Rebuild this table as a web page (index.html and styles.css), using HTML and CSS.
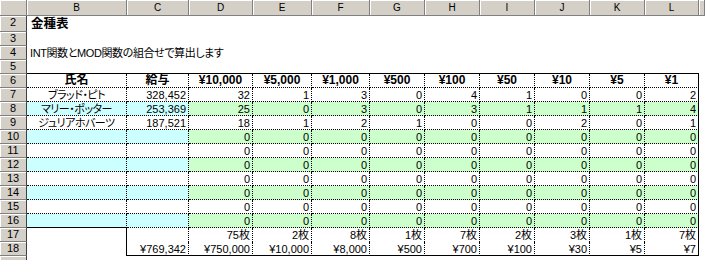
FILE: index.html
```html
<!DOCTYPE html>
<html lang="ja">
<head>
<meta charset="utf-8">
<title>金種表</title>
<link rel="stylesheet" href="styles.css">
</head>
<body>
<div class="sheet">
  <div class="hd"></div><div class="hd">B</div><div class="hd">C</div><div class="hd">D</div><div class="hd">E</div><div class="hd">F</div><div class="hd">G</div><div class="hd">H</div><div class="hd">I</div><div class="hd">J</div><div class="hd">K</div><div class="hd">L</div><div class="hd"></div>

  <div class="rn">2</div><div class="line title">金種表</div><div></div>
  <div class="rn">3</div><div class="line"></div><div></div>
  <div class="rn">4</div><div class="line">INT関数とMOD関数の組合せで算出します</div><div></div>
  <div class="rn">5</div><div class="line rule"></div><div></div>

  <div class="rn">6</div><div class="c h">氏名</div><div class="c h">給与</div><div class="c h">¥10,000</div><div class="c h">¥5,000</div><div class="c h">¥1,000</div><div class="c h">¥500</div><div class="c h">¥100</div><div class="c h">¥50</div><div class="c h">¥10</div><div class="c h">¥5</div><div class="c h last">¥1</div><div></div>

  <div class="rn">7</div><div class="c nm">ブラッド・ピト</div><div class="c">328,452</div><div class="c">32</div><div class="c">1</div><div class="c">3</div><div class="c">0</div><div class="c">4</div><div class="c">1</div><div class="c">0</div><div class="c">0</div><div class="c last">2</div><div></div>
  <div class="rn">8</div><div class="c nm cy">マリー・ポッター</div><div class="c cy">253,369</div><div class="c gr">25</div><div class="c gr">0</div><div class="c gr">3</div><div class="c gr">0</div><div class="c gr">3</div><div class="c gr">1</div><div class="c gr">1</div><div class="c gr">1</div><div class="c gr last">4</div><div></div>
  <div class="rn">9</div><div class="c nm">ジュリアホバーツ</div><div class="c">187,521</div><div class="c">18</div><div class="c">1</div><div class="c">2</div><div class="c">1</div><div class="c">0</div><div class="c">0</div><div class="c">2</div><div class="c">0</div><div class="c last">1</div><div></div>
  <div class="rn">10</div><div class="c nm cy"></div><div class="c cy"></div><div class="c gr">0</div><div class="c gr">0</div><div class="c gr">0</div><div class="c gr">0</div><div class="c gr">0</div><div class="c gr">0</div><div class="c gr">0</div><div class="c gr">0</div><div class="c gr last">0</div><div></div>
  <div class="rn">11</div><div class="c nm"></div><div class="c"></div><div class="c">0</div><div class="c">0</div><div class="c">0</div><div class="c">0</div><div class="c">0</div><div class="c">0</div><div class="c">0</div><div class="c">0</div><div class="c last">0</div><div></div>
  <div class="rn">12</div><div class="c nm cy"></div><div class="c cy"></div><div class="c gr">0</div><div class="c gr">0</div><div class="c gr">0</div><div class="c gr">0</div><div class="c gr">0</div><div class="c gr">0</div><div class="c gr">0</div><div class="c gr">0</div><div class="c gr last">0</div><div></div>
  <div class="rn">13</div><div class="c nm"></div><div class="c"></div><div class="c">0</div><div class="c">0</div><div class="c">0</div><div class="c">0</div><div class="c">0</div><div class="c">0</div><div class="c">0</div><div class="c">0</div><div class="c last">0</div><div></div>
  <div class="rn">14</div><div class="c nm cy"></div><div class="c cy"></div><div class="c gr">0</div><div class="c gr">0</div><div class="c gr">0</div><div class="c gr">0</div><div class="c gr">0</div><div class="c gr">0</div><div class="c gr">0</div><div class="c gr">0</div><div class="c gr last">0</div><div></div>
  <div class="rn">15</div><div class="c nm"></div><div class="c"></div><div class="c">0</div><div class="c">0</div><div class="c">0</div><div class="c">0</div><div class="c">0</div><div class="c">0</div><div class="c">0</div><div class="c">0</div><div class="c last">0</div><div></div>
  <div class="rn">16</div><div class="c nm cy edge"></div><div class="c cy"></div><div class="c gr">0</div><div class="c gr">0</div><div class="c gr">0</div><div class="c gr">0</div><div class="c gr">0</div><div class="c gr">0</div><div class="c gr">0</div><div class="c gr">0</div><div class="c gr last">0</div><div></div>

  <div class="rn">17</div><div class="blank"></div><div class="c open"></div><div class="c open">75枚</div><div class="c open">2枚</div><div class="c open">8枚</div><div class="c open">1枚</div><div class="c open">7枚</div><div class="c open">2枚</div><div class="c open">3枚</div><div class="c open">1枚</div><div class="c open last">7枚</div><div></div>
  <div class="rn">18</div><div class="blank"></div><div class="c tot">¥769,342</div><div class="c tot">¥750,000</div><div class="c tot">¥10,000</div><div class="c tot">¥8,000</div><div class="c tot">¥500</div><div class="c tot">¥700</div><div class="c tot">¥100</div><div class="c tot">¥30</div><div class="c tot">¥5</div><div class="c tot last">¥7</div><div></div>
  <div class="rn"></div><div class="line"></div><div></div>
</div>
</body>
</html>
```

FILE: styles.css
```css
html, body {
  margin: 0;
  padding: 0;
  background: #fff;
  overflow: hidden;
}

body {
  width: 705px;
  height: 260px;
  font-family: "Liberation Sans", "Noto Sans CJK JP", "Noto Sans CJK SC", sans-serif;
  color: #000;
}

.sheet {
  display: grid;
  grid-template-columns: 27px 100px 62px 64px 59px 58px 55px 55px 55px 55px 55px 54px 1fr;
  grid-template-rows: 16px 16px repeat(17, 14px);
}

.sheet > div {
  box-sizing: border-box;
  overflow: hidden;
  white-space: nowrap;
}

.hd {
  background: #d4d0c8;
  border-right: 1px solid #808080;
  border-bottom: 1px solid #808080;
  box-shadow: inset 1px 1px 0 #fff;
  font-size: 10px;
  line-height: 15px;
  text-align: center;
}

.rn {
  background: #d4d0c8;
  border-right: 1px solid #404040;
  border-bottom: 1px solid #808080;
  box-shadow: inset 1px 1px 0 #fff;
  font-size: 11px;
  line-height: 13px;
  text-align: center;
}

.line {
  grid-column: 2 / 13;
  padding-left: 3px;
  font-size: 11px;
  line-height: 14px;
  letter-spacing: -0.4px;
  font-feature-settings: "palt";
}

.title {
  font-weight: bold;
  font-size: 12.5px;
  line-height: 17px;
  letter-spacing: 0;
  padding-left: 4px;
}

.rule {
  border-bottom: 1px solid #000;
}

.c {
  border-right: 1px dotted #000;
  border-bottom: 1px dotted #000;
  text-align: right;
  padding: 1px 2px 0 0;
  font-size: 11px;
  line-height: 12px;
}

.h {
  font-weight: bold;
  text-align: center;
  font-size: 12px;
  padding: 0;
  line-height: 13px;
}

.nm {
  text-align: center;
  font-size: 11px;
  letter-spacing: -0.5px;
  padding: 1px 0 0;
  font-feature-settings: "palt";
}

.cy {
  background: #ccffff;
}

.gr {
  background: #ccffcc;
}

.last {
  border-right-style: solid;
}

.edge {
  border-bottom-style: solid;
}

.open {
  border-bottom: none;
}

.tot {
  border-bottom: 1px solid #000;
}

.blank {
  border-right: 1px solid #000;
}
```
